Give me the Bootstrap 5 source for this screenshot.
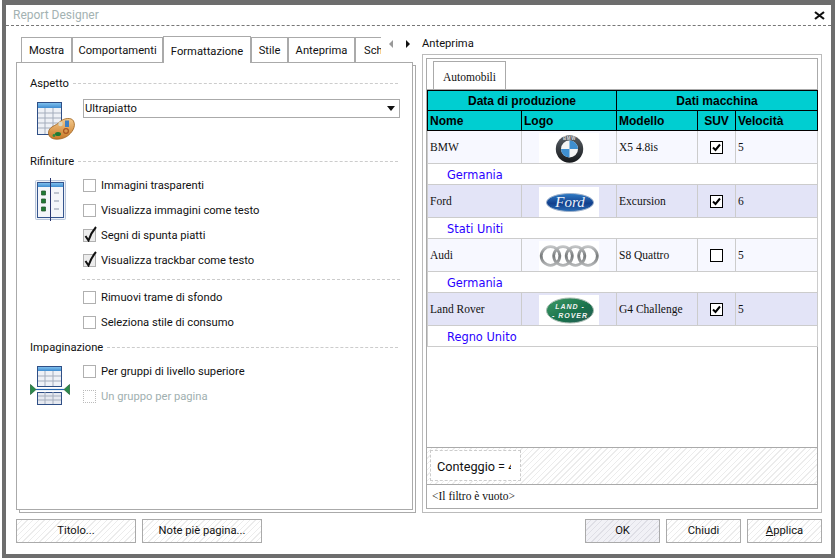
<!DOCTYPE html>
<html lang="it">
<head>
  <meta charset="UTF-8" />
  <meta name="viewport" content="width=device-width, initial-scale=1.0">
  <title>Report Designer</title>
  <link href="https://cdn.jsdelivr.net/npm/bootstrap@5.3.3/dist/css/bootstrap.min.css" rel="stylesheet"/>
  <style>
    html, body { height: 560px; overflow: hidden; background: #fff; }
    body { font-family: Roboto, "Liberation Sans", sans-serif; font-size: 11.2px; color: #111; }
    .hatch { background: repeating-linear-gradient(135deg, #fff 0, #fff 3px, #ececec 3px, #ececec 4px); }

    .win { width: 833px; height: 558px; margin-left: 2px; border: 4px solid #6d6d6d; border-top-width: 5px; }
    .win-title { height: 21px; padding: 0 6px 0 7px; border-bottom: 1px dashed #777; font-size: 12px; color: #a3b2b2; }
    .win-body { padding: 10px 9px 0 10px; gap: 6px; height: 487px; }
    .left-col, .right-col { width: 400px; }

    .tab-row { height: 26px; padding-left: 5px; }
    .tab-clip { width: 360px; overflow: hidden; height: 27px; position: relative; z-index: 2; flex: none; }
    .tab-clip .nav-tabs { border: 0; flex-wrap: nowrap; height: 27px; align-items: flex-end; }
    .tab-clip .nav-link { height: 25px; padding: 5px 0 0; margin: 0 0 1px; border: 1px solid #aaa; border-bottom: 0; border-radius: 0; color: #111; text-align: center; white-space: nowrap; }
    .tab-clip .nav-link.active { height: 27px; margin: 0; padding-top: 7px; color: #111; background: #fff; border-width: 1px 1px 0; border-color: #aaa; }
    .arrows { gap: 13px; padding: 4px 0 0 8px; }
    .tri-l { width: 0; height: 0; border: 4px solid transparent; border-left: 0; border-right: 4px solid #999; }
    .tri-r { width: 0; height: 0; border: 4px solid transparent; border-right: 0; border-left: 4px solid #111; }

    .opts-panel { width: 397px; height: 448px; border: 1px solid #aaa; background: #fff; padding: 13px 12px 0 13px; box-shadow: 3px 3px 0 -1px #fff, 3px 3px 0 0 #aaa; }
    .sec-head { height: 14px; line-height: 14px; gap: 4px; }
    .sec-head span { padding-top: 2px; }
    .sec-head i { flex: 1; border-top: 1px dashed #ccc; margin-right: 2px; }
    .sec-icon { width: 53px; flex: none; display: block; }
    .plain-select { height: 19px; width: 317px; padding: 0 0 0 1px; margin-top: 9px; border: 1px solid #aaa; border-radius: 0; font-size: 11.2px; line-height: 17px; color: #111; font-family: inherit; background-position: right 3px center; background-size: 10px 6px; background-image: url("data:image/svg+xml,%3Csvg xmlns='http://www.w3.org/2000/svg' viewBox='0 0 10 6'%3E%3Cpath d='M1 0h8L5 5z' fill='%23111'/%3E%3C/svg%3E"); }
    .plain-select:focus { border-color: #aaa; box-shadow: none; }
    .opt-row { height: 25px; min-height: 0; padding: 0; margin: 0; gap: 5px; }
    .opt-row .form-check-input { width: 13px; height: 13px; margin: 0; float: none; flex: none; border: 1px solid #b0b0b0; border-radius: 0; background-color: #fff; }
    .opt-row .form-check-label { opacity: 1; line-height: 13px; }
    .opt-row.is-off .form-check-input { border: 1px dotted #bbb; opacity: 1; }
    .opt-row.is-off .form-check-label { color: #9fb0b0; opacity: 1; }
    .opt-row .form-check-input:checked { background-color: #ececec; border-color: #b0b0b0; background-image: none; }
    .tick-wrap { width: 13px; height: 13px; flex: none; }
    .tick-wrap svg { position: absolute; left: 1px; top: -3px; }
    .opt-sep { border-top: 1px dashed #ccc; margin: 6px 0 5px -1px; }

    .preview-label { height: 18px; line-height: 14px; padding-top: 1px; }
    .preview-outer { height: 459px; border: 1px solid #bbb; padding: 3px; }
    .preview-inner { height: 100%; border: 1px solid #aaa; }
    .sheet-tabs { height: 30px; padding: 2px 0 0 6px; flex: none; }
    .sheet-tab { width: 73px; height: 28px; border: 1px solid #aaa; border-bottom: 0; font-family: "Liberation Serif", serif; font-size: 11.5px; padding-top: 7px; text-align: center; background: #fff; margin-bottom: -1px; position: relative; }
    .sheet-line { border-top: 1px solid #aaa; height: 1px; flex: none; }

    .cars { width: 390px; table-layout: fixed; border-collapse: collapse; margin: 0; flex: none; --bs-table-bg: transparent; --bs-table-border-color: #ccc; font-family: "Liberation Serif", serif; font-size: 11.5px; color: #111; }
    .cars > :not(caption) > * > * { padding: 1px 2px 0; border: 1px solid #ccc; vertical-align: middle; background: transparent; box-shadow: none; color: #111; }
    .cars thead th { padding: 0 2px; background: #00ced1; border: 1px solid #000; font-family: "Liberation Sans", sans-serif; font-weight: 700; font-size: 12px; height: 20px; line-height: 14px; color: #000; }
    .cars .row-a > td { background: #f7f8ff; height: 33px; }
    .cars .row-b > td { background: #e3e4f7; height: 33px; }
    .cars > tbody > .row-geo > td { height: 21px; background: #fff; padding: 2px 2px 0 19px; font-family: "DejaVu Sans", sans-serif; font-size: 11.4px; line-height: 14px; color: #2a00ff; }
    .logo-box { width: 60px; height: 30px; background: #fff; display: block; margin: 0 auto; }
    .grid-check { width: 13px; height: 13px; border: 1px solid #000; background: #fff; margin: 0 auto; display: block; }
    .grid-gap { flex: 1; }
    .sum-row { height: 37px; border-top: 1px solid #aaa; padding: 2px 3px; flex: none; }
    .sum-box { width: 91px; height: 31px; border: 1px dashed #ccc; background: #fff; padding-left: 6px; font-size: 12.7px; line-height: 32px; overflow: hidden; white-space: nowrap; }
    .sum-clip { width: 74px; overflow: hidden; display: block; }
    .filter-row { height: 24px; flex: none; border-top: 1px solid #aaa; padding-left: 5px; font-family: "Liberation Serif", serif; font-size: 11.5px; line-height: 22px; }

    .win-foot { padding: 6px 9px 0 10px; }
    .win-foot .btn { width: 120px; height: 24px; padding: 0; border: 1px solid #aaa; border-radius: 0; font-size: 11.2px; line-height: 22px; color: #111; }
    .win-foot .btn.short-btn { width: 75px; }
    .win-foot .btn.ok-btn { background: repeating-linear-gradient(135deg, #f1f1f6 0, #f1f1f6 3px, #dfdfe6 3px, #dfdfe6 4px); }
  </style>
</head>
<body>
<div class="win d-flex flex-column">
  <div class="win-title d-flex align-items-center justify-content-between">
    <span>Report Designer</span>
    <svg width="11" height="9" viewBox="0 0 11 9"><path d="M1 1l9 7M10 1L1 8" stroke="#111" stroke-width="2.2"/></svg>
  </div>

  <div class="win-body d-flex">
    <!-- Left: options -->
    <div class="left-col">
      <div class="tab-row d-flex">
        <div class="tab-clip">
          <ul class="nav nav-tabs">
            <li class="nav-item"><a class="nav-link hatch" style="width:51px">Mostra</a></li>
            <li class="nav-item"><a class="nav-link hatch" style="width:91px">Comportamenti</a></li>
            <li class="nav-item"><a class="nav-link active" style="width:88px">Formattazione</a></li>
            <li class="nav-item"><a class="nav-link hatch" style="width:37px">Stile</a></li>
            <li class="nav-item"><a class="nav-link hatch" style="width:67px">Anteprima</a></li>
            <li class="nav-item"><a class="nav-link hatch" style="width:40px;text-align:left;padding-left:8px">Schema</a></li>
          </ul>
        </div>
        <div class="arrows d-flex"><span class="tri-l"></span><span class="tri-r"></span></div>
      </div>

      <div class="opts-panel">
        <div class="sec-head d-flex align-items-center"><span>Aspetto</span><i></i></div>
        <div class="d-flex" style="height:64px">
          <svg class="sec-icon" width="53" height="64" viewBox="30 90 53 64">
            <defs>
              <linearGradient id="pal" x1="0" y1="0" x2="0" y2="1"><stop offset="0" stop-color="#f3c98c"/><stop offset="1" stop-color="#c97a28"/></linearGradient>
              <linearGradient id="head" x1="0" y1="0" x2="0" y2="1"><stop offset="0" stop-color="#7fc0ee"/><stop offset="1" stop-color="#3f8cd0"/></linearGradient>
            </defs>
            <rect x="37.500" y="102.500" width="24" height="32" fill="#eef1f6" stroke="#2f4f86"/>
            <rect x="38" y="103" width="23" height="5" fill="url(#head)"/>
            <path d="M38 113h23M38 118h23M38 123h23M38 128h23M45 108v26M53 108v26" stroke="#a4adbc"/>
            <path d="M48.500 133c0-7 8-7 11-11 4-4 12-5 14-1 3 6-2 12-6 15-4 3-11 4-15 2.500-2.500-1-4-3-4-5.500z" fill="url(#pal)" stroke="#9c5f1a" stroke-width=".8"/>
            <path d="M65 120.500h4v6.500h-4z" fill="#3b7fc4"/><circle cx="60.500" cy="124" r="2.200" fill="#d6d6c4"/>
            <ellipse cx="58" cy="134" rx="3" ry="2" fill="#1e7a34"/><circle cx="54" cy="135.500" r="1.400" fill="#2b8f45"/>
            <circle cx="66" cy="131" r="2.400" fill="none" stroke="#a8551f" stroke-width="1.200"/>
          </svg>
          <select class="form-select plain-select"><option>Ultrapiatto</option></select>
        </div>

        <div class="sec-head d-flex align-items-center"><span>Rifiniture</span><i></i></div>
        <div class="d-flex" style="margin-top:5px">
          <svg class="sec-icon" width="53" height="55" viewBox="30 173 53 55">
            <rect x="35.500" y="180.500" width="30" height="39" rx="1" fill="#eef2f8" stroke="#b9c6da"/>
            <rect x="37.500" y="182.500" width="26" height="35" fill="#f4f6fa" stroke="#36568f"/>
            <rect x="38" y="183" width="25" height="4" fill="url(#head)"/>
            <path d="M41.500 191h4v4h-4zM41.500 199h4v4h-4zM41.500 207h4v4h-4z" fill="#1e7a34" stroke="#2a5a30" stroke-width=".8"/>
            <path d="M54 193h5M54 201h5M54 209h5" stroke="#8a94a5" stroke-width="1.200"/>
            <path d="M50.500 178v43" stroke="#27346f"/>
          </svg>
          <div class="flex-grow-1">
            <div class="form-check opt-row d-flex align-items-center"><input class="form-check-input" type="checkbox" id="o1"><label class="form-check-label" for="o1">Immagini trasparenti</label></div>
            <div class="form-check opt-row d-flex align-items-center"><input class="form-check-input" type="checkbox" id="o2"><label class="form-check-label" for="o2">Visualizza immagini come testo</label></div>
            <div class="form-check opt-row d-flex align-items-center">
              <span class="tick-wrap position-relative d-block"><input class="form-check-input d-block" type="checkbox" id="o3" checked>
                <svg width="13" height="16" viewBox="0 0 13 16"><path d="M1.500 10l3 4.500C6 10 8.500 5 12 1" fill="none" stroke="#111" stroke-width="2"/></svg></span>
              <label class="form-check-label" for="o3">Segni di spunta piatti</label></div>
            <div class="form-check opt-row d-flex align-items-center">
              <span class="tick-wrap position-relative d-block"><input class="form-check-input d-block" type="checkbox" id="o4" checked>
                <svg width="13" height="16" viewBox="0 0 13 16"><path d="M1.500 10l3 4.500C6 10 8.500 5 12 1" fill="none" stroke="#111" stroke-width="2"/></svg></span>
              <label class="form-check-label" for="o4">Visualizza trackbar come testo</label></div>
            <div class="opt-sep"></div>
            <div class="form-check opt-row d-flex align-items-center"><input class="form-check-input" type="checkbox" id="o5"><label class="form-check-label" for="o5">Rimuovi trame di sfondo</label></div>
            <div class="form-check opt-row d-flex align-items-center"><input class="form-check-input" type="checkbox" id="o6"><label class="form-check-label" for="o6">Seleziona stile di consumo</label></div>
          </div>
        </div>

        <div class="sec-head d-flex align-items-center" style="margin-top:5px"><span>Impaginazione</span><i></i></div>
        <div class="d-flex" style="margin-top:5px">
          <svg class="sec-icon" width="53" height="50" viewBox="30 359 53 50">
            <rect x="37.500" y="366.500" width="24" height="20" fill="#eef1f6" stroke="#2f4f86"/>
            <rect x="38" y="367" width="23" height="4" fill="url(#head)"/>
            <path d="M38 376h23M38 381h23M45 371v15M53 371v15" stroke="#a4adbc"/>
            <path d="M36 389.500h28" stroke="#2466b0" stroke-width="1.200"/>
            <path d="M30.500 384.500l5.500 5-5.500 5zM69.500 384.500l-5.500 5 5.500 5z" fill="#2b8a4a" stroke="#1d5f33" stroke-width=".7"/>
            <rect x="37.500" y="392.500" width="24" height="12" fill="#e6e9f0" stroke="#2f4f86"/>
            <path d="M38 396h23M38 400h23M45 392v12M53 392v12" stroke="#a4adbc"/>
          </svg>
          <div class="flex-grow-1">
            <div class="form-check opt-row d-flex align-items-center"><input class="form-check-input" type="checkbox" id="o7"><label class="form-check-label" for="o7">Per gruppi di livello superiore</label></div>
            <div class="form-check opt-row is-off d-flex align-items-center"><input class="form-check-input" type="checkbox" id="o8" disabled><label class="form-check-label" for="o8">Un gruppo per pagina</label></div>
          </div>
        </div>
      </div>
    </div>

    <!-- Right: preview -->
    <div class="right-col">
      <div class="preview-label">Anteprima</div>
      <div class="preview-outer">
        <div class="preview-inner d-flex flex-column">
          <div class="sheet-tabs d-flex"><div class="sheet-tab">Automobili</div></div>
          <div class="sheet-line"></div>
          <table class="table cars">
            <colgroup><col style="width:94px"><col style="width:95px"><col style="width:81px"><col style="width:38px"><col style="width:82px"></colgroup>
            <thead>
              <tr><th colspan="2" class="text-center">Data di produzione</th><th colspan="3" class="text-center">Dati macchina</th></tr>
              <tr><th>Nome</th><th>Logo</th><th>Modello</th><th class="text-center">SUV</th><th>Velocità</th></tr>
            </thead>
            <tbody>
              <tr class="row-a"><td>BMW</td>
                <td><svg class="logo-box" viewBox="0 0 60 30">
                  <defs>
                    <linearGradient id="ring" x1="0" y1="0" x2="0" y2="1"><stop offset="0" stop-color="#5a6067"/><stop offset="1" stop-color="#15181b"/></linearGradient>
                    <linearGradient id="fordb" x1="0" y1="0" x2="0" y2="1"><stop offset="0" stop-color="#2f7cc6"/><stop offset=".55" stop-color="#123f8c"/><stop offset="1" stop-color="#2a6db5"/></linearGradient>
                    <linearGradient id="lrg" x1="0" y1="0" x2="1" y2="1"><stop offset="0" stop-color="#3f9a66"/><stop offset=".6" stop-color="#17704a"/><stop offset="1" stop-color="#2a5a5a"/></linearGradient>
                    <linearGradient id="audi" x1="0" y1="0" x2="0" y2="1"><stop offset="0" stop-color="#c2c4c5"/><stop offset=".5" stop-color="#777a7b"/><stop offset="1" stop-color="#b5b7b8"/></linearGradient>
                  </defs>
                  <circle cx="30.500" cy="16" r="13.700" fill="url(#ring)"/>
                  <circle cx="30.500" cy="16" r="8.500" fill="#f4f4f4"/>
                  <path d="M30.500 16V7.500a8.500 8.500 0 0 1 8.500 8.500zM30.500 16v8.500a8.500 8.500 0 0 1-8.500-8.500z" fill="#3f8fd0"/>
                  <text x="30.500" y="6.800" text-anchor="middle" font-family="Liberation Sans" font-weight="700" font-size="4.500" fill="#ddd" letter-spacing=".6">BMW</text>
                </svg></td>
                <td>X5 4.8is</td><td><span class="grid-check"><svg class="d-block" width="11" height="11" viewBox="0 0 11 11"><path d="M2 5.500l2.500 2.500L9 2.500" fill="none" stroke="#000" stroke-width="2"/></svg></span></td><td>5</td></tr>
              <tr class="row-geo"><td colspan="5">Germania</td></tr>
              <tr class="row-b"><td>Ford</td>
                <td><svg class="logo-box" viewBox="0 0 60 30">
                  <ellipse cx="31" cy="15.500" rx="23.500" ry="9" fill="url(#fordb)" stroke="#9fb2cc"/>
                  <text x="31" y="20" text-anchor="middle" font-family="Liberation Serif" font-style="italic" font-size="15" fill="#eef3fa">Ford</text>
                </svg></td>
                <td>Excursion</td><td><span class="grid-check"><svg class="d-block" width="11" height="11" viewBox="0 0 11 11"><path d="M2 5.500l2.500 2.500L9 2.500" fill="none" stroke="#000" stroke-width="2"/></svg></span></td><td>6</td></tr>
              <tr class="row-geo"><td colspan="5">Stati Uniti</td></tr>
              <tr class="row-a"><td>Audi</td>
                <td><svg class="logo-box" viewBox="0 0 60 30">
                  <g fill="none" stroke="url(#audi)" stroke-width="2.800"><circle cx="11.500" cy="15" r="9.300"/><circle cx="24" cy="15" r="9.300"/><circle cx="36.500" cy="15" r="9.300"/><circle cx="49" cy="15" r="9.300"/></g>
                </svg></td>
                <td>S8 Quattro</td><td><span class="grid-check"></span></td><td>5</td></tr>
              <tr class="row-geo"><td colspan="5">Germania</td></tr>
              <tr class="row-b"><td>Land Rover</td>
                <td><svg class="logo-box" viewBox="0 0 60 30">
                  <ellipse cx="31" cy="15.500" rx="23.500" ry="12.500" fill="url(#lrg)" stroke="#a9bdb2"/>
                  <text x="31" y="13.500" text-anchor="middle" font-family="Liberation Sans" font-style="italic" font-weight="700" font-size="7" fill="#f2f2f2" letter-spacing="1">LAND -</text>
                  <text x="31" y="22.500" text-anchor="middle" font-family="Liberation Sans" font-style="italic" font-weight="700" font-size="7" fill="#f2f2f2" letter-spacing="1">- ROVER</text>
                </svg></td>
                <td>G4 Challenge</td><td><span class="grid-check"><svg class="d-block" width="11" height="11" viewBox="0 0 11 11"><path d="M2 5.500l2.500 2.500L9 2.500" fill="none" stroke="#000" stroke-width="2"/></svg></span></td><td>5</td></tr>
              <tr class="row-geo"><td colspan="5">Regno Unito</td></tr>
            </tbody>
          </table>
          <div class="grid-gap"></div>
          <div class="sum-row hatch"><div class="sum-box"><span class="sum-clip">Conteggio = 4</span></div></div>
          <div class="filter-row">&lt;Il filtro è vuoto&gt;</div>
        </div>
      </div>
    </div>
  </div>

  <div class="win-foot d-flex justify-content-between">
    <div class="d-flex" style="gap:6px">
      <button class="btn hatch" type="button">Titolo...</button>
      <button class="btn hatch" type="button">Note piè pagina...</button>
    </div>
    <div class="d-flex" style="gap:6px">
      <button class="btn short-btn ok-btn" type="button">OK</button>
      <button class="btn short-btn hatch" type="button">Chiudi</button>
      <button class="btn short-btn hatch" type="button"><u>A</u>pplica</button>
    </div>
  </div>
</div>
<script src="https://cdn.jsdelivr.net/npm/bootstrap@5.3.3/dist/js/bootstrap.bundle.min.js"></script>
</body>
</html>
